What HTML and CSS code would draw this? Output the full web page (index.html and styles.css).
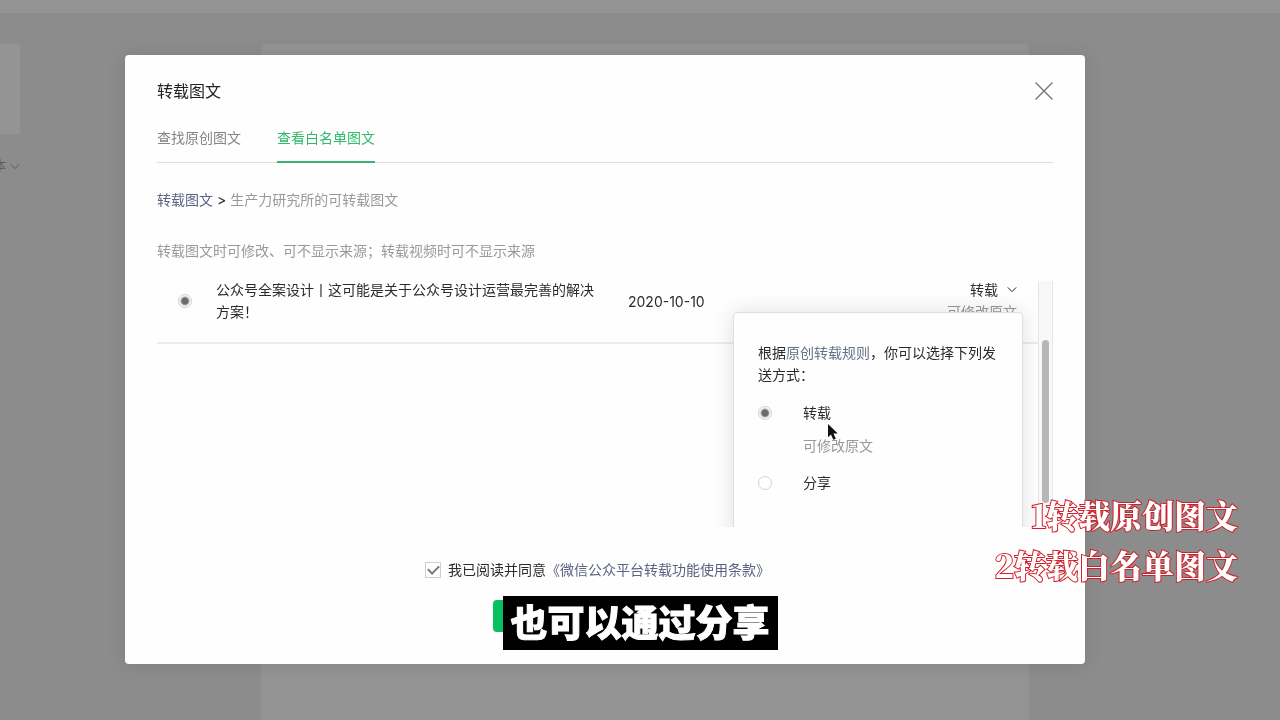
FILE: index.html
```html
<!DOCTYPE html>
<html lang="zh-CN">
<head>
<meta charset="utf-8">
<meta name="viewport" content="width=device-width, initial-scale=1">
<title>转载图文</title>
<link rel="stylesheet" href="styles.css">
</head>
<body>
<div class="page">
  <header class="topbar"></header>
  <div class="workspace">
    <aside class="sidebar">
      <div class="sidebar-card"></div>
      <div class="sidebar-menu"><span class="sidebar-label">本</span>
        <svg class="chevron" viewBox="0 0 12 8" aria-hidden="true"><path d="M1 1.5 6 6.5 11 1.5"/></svg>
      </div>
    </aside>
    <main class="editor"></main>
  </div>
</div>

<div class="backdrop">
  <section class="dialog" role="dialog" aria-labelledby="dialog-title">
    <header class="dialog-head">
      <h1 class="dialog-title" id="dialog-title">转载图文</h1>
      <button class="close" type="button" aria-label="关闭">
        <svg viewBox="0 0 18 18" aria-hidden="true"><path d="M.5.5 17.5 17.5M17.5.5.5 17.5"/></svg>
      </button>
    </header>
    <nav class="tabs">
      <a class="tab" href="#">查找原创图文</a>
      <a class="tab tab-active" href="#">查看白名单图文</a>
    </nav>
    <p class="crumbs"><a class="link" href="#">转载图文</a> &gt; <span class="muted">生产力研究所的可转载图文</span></p>
    <p class="tip">转载图文时可修改、可不显示来源；转载视频时可不显示来源</p>

    <div class="list">
      <div class="list-body">
        <div class="article">
          <input class="radio" type="radio" name="article" id="article-1" checked>
          <label class="article-title" for="article-1">公众号全案设计丨这可能是关于公众号设计运营最完善的解决方案！</label>
          <time class="article-date" datetime="2020-10-10">2020-10-10</time>
          <div class="article-mode">
            <button class="mode-button" type="button">转载
              <svg class="chevron" viewBox="0 0 12 8" aria-hidden="true"><path d="M1 1.5 6 6.5 11 1.5"/></svg>
            </button>
            <span class="muted">可修改原文</span>
          </div>
        </div>
        <div class="popover">
          <p class="popover-text">根据<a class="link" href="#">原创转载规则</a>，你可以选择下列发送方式：</p>
          <div class="option">
            <input class="radio" type="radio" name="mode" id="mode-reprint" checked>
            <label for="mode-reprint">转载</label>
            <span class="option-note">可修改原文</span>
          </div>
          <div class="option">
            <input class="radio" type="radio" name="mode" id="mode-share">
            <label for="mode-share">分享</label>
          </div>
          <svg class="pointer" viewBox="0 0 12 18" aria-hidden="true"><path d="M1 1V14.2L4 11.5 6.3 16.8 8.8 15.7 6.5 10.6H10.8Z"/></svg>
        </div>
      </div>
      <div class="scrollbar"><div class="thumb"></div></div>
    </div>

    <footer class="dialog-foot">
      <div class="agree">
        <input class="check" type="checkbox" id="agree" checked>
        <label for="agree">我已阅读并同意</label><a class="link" href="#">《微信公众平台转载功能使用条款》</a>
      </div>
      <button class="submit" type="button" aria-label="确定"></button>
    </footer>
  </section>
</div>

<div class="subtitle-row"><p class="subtitle">也可以通过分享</p></div>
<div class="notes"><p class="note">1转载原创图文</p><p class="note">2转载白名单图文</p></div>
</body>
</html>
```

FILE: styles.css
```css
* { box-sizing: border-box; }

body {
  margin: 0;
  font: 14px/22px Inter, "Noto Sans CJK SC", sans-serif;
  color: #2b2b2b;
  background: #8c8c8c;
  overflow: hidden;
}

h1, p { margin: 0; }
a { text-decoration: none; }
button { padding: 0; border: 0; background: none; font: inherit; color: inherit; }

.page { display: flex; flex-direction: column; height: 100vh; }
.topbar { height: 13px; background: #939393; }
.workspace { flex: 1; display: flex; padding: 31px 251px 0 0; }
.sidebar { width: 261px; flex: none; }
.sidebar-card { width: 20px; height: 90px; border-radius: 0 3px 3px 0; background: #949494; }
.sidebar-menu {
  display: flex;
  align-items: center;
  justify-content: flex-end;
  gap: 4px;
  width: 20px;
  margin-top: 21px;
  color: #5c5c5c;
  overflow: hidden;
}
.sidebar-label { font-size: 12px; }
.editor { flex: 1; border-radius: 4px 4px 0 0; background: #949494; }

.chevron { width: 10px; height: 7px; flex: none; fill: none; stroke: currentColor; stroke-width: 1.2; }

.backdrop {
  position: fixed;
  inset: 0;
  display: flex;
  align-items: center;
  justify-content: center;
  padding: 0 195px 2px 125px;
}
.dialog {
  flex: 1;
  padding: 24px 32px 32px;
  border-radius: 4px;
  background: #fefefe;
  box-shadow: 0 1px 20px rgba(0, 0, 0, .1);
}
.dialog-head { display: flex; align-items: center; justify-content: space-between; height: 24px; }
.dialog-title { font-size: 16px; font-weight: 400; line-height: 24px; color: #222; }
.close { width: 18px; height: 18px; }
.close svg { display: block; fill: none; stroke: #777; stroke-width: 1.4; }

.tabs { display: flex; gap: 36px; margin-top: 24px; border-bottom: 1px solid #dedede; }
.tab { padding-bottom: 12px; margin-bottom: -1px; border-bottom: 2px solid transparent; color: #858585; }
.tab-active { border-color: #3bb070; color: #2fba6c; }

.crumbs { margin-top: 26px; }
.tip { margin-top: 29px; color: #999; }
.link { color: #576b95; }
.crumbs .link { color: #596382; }
.muted { color: #999; }

.list { display: flex; height: 246px; margin-top: 19px; overflow: hidden; }
.list-body { position: relative; flex: 1; overflow: hidden; }
.article {
  display: grid;
  grid-template-columns: 14px 379px 1fr auto;
  column-gap: 24px;
  align-items: start;
  height: 63px;
  padding: 0 21px;
  border-bottom: 2px solid #ebebeb;
}
.article .radio { margin-top: 13px; }
.article-title { margin-top: -2px; }
.article-date { margin: 10px 0 0 9px; }
.article-mode { display: flex; flex-direction: column; align-items: flex-end; margin-top: -2px; }
.mode-button { display: flex; align-items: center; gap: 9px; }

.radio {
  appearance: none;
  width: 14px;
  height: 14px;
  margin: 0;
  border: 1px solid #d2d2d2;
  border-radius: 50%;
  background: #fff;
}
.radio:checked { background: radial-gradient(circle, #6b6b6b 3px, #f5f5f5 5px); }

.scrollbar { width: 15px; padding: 59px 3px 0; border: 1px solid #e6e6e6; border-width: 0 1px; background: #f8f8f8; }
.thumb { height: 163px; border-radius: 4px; background: #b7b7b7; }

.popover {
  position: absolute;
  top: 31px;
  right: 15px;
  width: 290px;
  height: 260px;
  padding: 29px 24px;
  border: 1px solid #e0e0e0;
  border-radius: 4px;
  background: #fefefe;
  box-shadow: 0 0 22px rgba(0, 0, 0, .12);
}
.popover-text { margin-bottom: 16px; }
.popover-text .link { color: #66728b; }
.option {
  display: grid;
  grid-template-columns: 14px 1fr;
  gap: 11px 31px;
  align-items: center;
  margin-bottom: 15px;
}
.option-note { grid-column: 2; color: #999; }
.pointer { position: absolute; top: 110px; left: 93px; width: 12px; height: 18px; fill: #111; stroke: #fff; stroke-width: 1; paint-order: stroke; }

.dialog-foot { display: flex; flex-direction: column; align-items: center; margin-top: 32px; }
.agree { display: flex; align-items: center; padding-right: 15px; }
.agree .link { color: #59647e; }
.check {
  appearance: none;
  display: grid;
  place-content: center;
  width: 16px;
  height: 16px;
  margin: 0 7px 0 0;
  border: 1px solid #d0d0d0;
  background: #fff;
}
.check:checked::before {
  content: "";
  width: 9px;
  height: 5px;
  margin-bottom: 2px;
  border: solid #777;
  border-width: 0 0 2px 2px;
  transform: rotate(-45deg);
}
.submit { width: 224px; height: 32px; margin-top: 19px; border-radius: 4px; background: #07c160; }

.subtitle-row { position: fixed; inset: auto 0 70px; display: flex; justify-content: center; }
.subtitle {
  padding: 0 8px 4px;
  background: #000;
  color: #fff;
  font: 900 37px/50px "Noto Sans CJK SC", sans-serif;
  -webkit-text-stroke: 1px #fff;
}
.notes { position: fixed; right: 42px; bottom: 131px; text-align: right; }
.note {
  color: #fff;
  font: 900 32px/50px "Noto Serif CJK SC", "Noto Serif SC", "Liberation Serif", "Noto Sans CJK SC", serif;
  -webkit-text-stroke: 2px #d0202a;
  paint-order: stroke fill;
}
```
